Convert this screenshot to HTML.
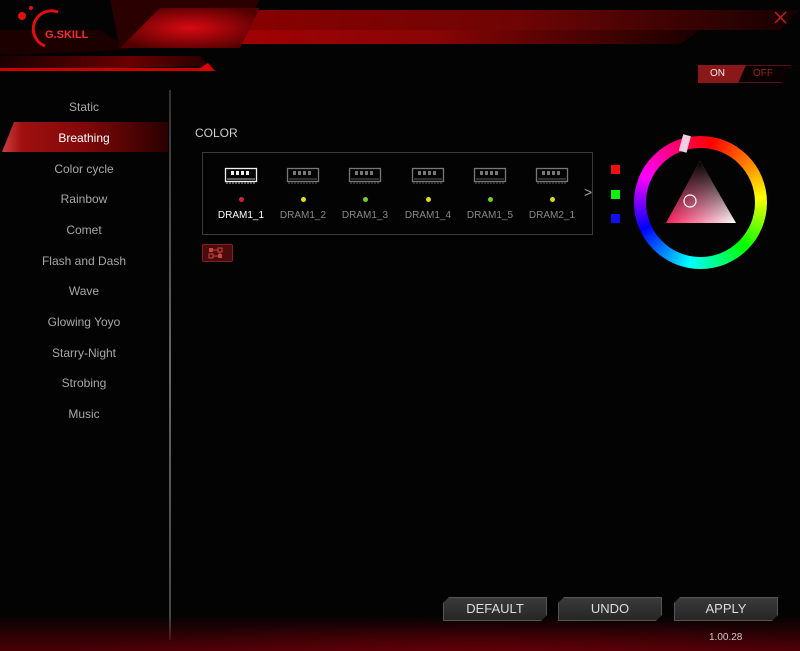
<!DOCTYPE html>
<html><head><meta charset="utf-8"><style>
*{margin:0;padding:0;box-sizing:border-box}
body{width:800px;height:651px;background:#030303;position:relative;overflow:hidden;font-family:"Liberation Sans",sans-serif}
.abs{position:absolute}
.menu div{position:absolute;left:0;width:168px;text-align:center;font-size:12px;color:#a8a8a8}
.btn{position:absolute;top:597px;width:104px;height:24px;background:linear-gradient(#3a3a3a,#262626);border:1px solid #555;color:#ddd;font-size:13px;text-align:center;line-height:22px;clip-path:polygon(6px 0,100% 0,100% calc(100% - 6px),calc(100% - 6px) 100%,0 100%,0 6px)}
.dram{position:absolute;top:167px;width:62px;text-align:center;font-size:10px;color:#8a8a8a}
.dram svg{display:block;margin:0 auto}
.dot{width:5px;height:5px;border-radius:50%;margin:12px auto 8px}
</style></head><body>
<svg width="0" height="0" style="position:absolute"><defs>
<g id="ram"><rect x="1.5" y="1.5" width="31" height="13" fill="none" stroke="currentColor" stroke-width="1.3"/>
<rect x="7" y="4" width="3" height="4" fill="currentColor"/><rect x="12" y="4" width="3" height="4" fill="currentColor"/><rect x="17" y="4" width="3" height="4" fill="currentColor"/><rect x="22" y="4" width="3" height="4" fill="currentColor"/>
<path d="M3 12H31M3 14V17M6 14V17M9 14V17M12 14V17M15 14V17M18 14V17M21 14V17M24 14V17M27 14V17M30 14V17" stroke="currentColor" stroke-width="0.8"/></g>
</defs></svg>
<!-- header -->
<svg class="abs" style="left:0;top:0" width="800" height="80">
<defs>
<linearGradient id="g1" x1="0" x2="1"><stop offset="0" stop-color="#a00"/><stop offset=".5" stop-color="#8a0505"/><stop offset="1" stop-color="#1a0000"/></linearGradient>
<linearGradient id="g2" x1="0" x2="1"><stop offset="0" stop-color="#1a0000"/><stop offset=".6" stop-color="#6a0000"/><stop offset="1" stop-color="#200"/></linearGradient>
<radialGradient id="g3" cx=".5" cy=".5" r=".6"><stop offset="0" stop-color="#d80a12"/><stop offset="1" stop-color="#500000"/></radialGradient>
</defs>
<polygon points="0,30 100,30 130,50 0,55" fill="#1c0000"/>
<polygon points="110,0 260,0 230,48 120,48" fill="#2a0000"/>
<polygon points="250,10 800,10 780,30 240,30" fill="url(#g1)" opacity=".8"/>
<polygon points="170,30 700,30 680,44 160,44" fill="url(#g1)"/>
<polygon points="160,8 260,8 240,48 120,48" fill="url(#g3)"/>
<polygon points="0,56 200,56 205,62 215,66 0,70" fill="url(#g2)"/>
<rect x="0" y="68" width="210" height="3" fill="#c00"/>
<polygon points="200,68 208,63 215,71 200,71" fill="#d00"/>
<circle cx="22" cy="16" r="4" fill="#e01010"/><circle cx="31" cy="8" r="2" fill="#e01010"/>
<path d="M45 46 A17 17 0 0 1 58 12" stroke="#e01010" stroke-width="3" fill="none"/>
<text x="45" y="38" font-family="Liberation Sans" font-weight="bold" font-size="11" fill="#f03030">G.SKILL</text>
<path d="M775 12 L786 23 M786 12 L775 23" stroke="#c02020" stroke-width="1.5"/>
</svg>
<!-- on/off -->
<div class="abs" style="left:698px;top:65px;width:93px;height:18px;border:1px solid #5a1010;background:#0a0000;clip-path:polygon(0 0,100% 0,calc(100% - 10px) 100%,0 100%)"></div>
<div class="abs" style="left:698px;top:65px;width:48px;height:18px;background:#8a1818;clip-path:polygon(0 0,100% 0,calc(100% - 8px) 100%,0 100%);color:#eee;font-size:10px;line-height:18px;padding-left:12px">ON</div>
<div class="abs" style="left:753px;top:65px;color:#9a2020;font-size:10px;line-height:18px">OFF</div>
<!-- sidebar -->
<div class="abs" style="left:169px;top:90px;width:2px;height:550px;background:linear-gradient(#333,#666,#444)"></div>
<div class="abs" style="left:2px;top:122px;width:166px;height:30px;background:linear-gradient(90deg,#d04040 0,#a01010 12%,#800808 50%,#2a0000 100%);clip-path:polygon(12px 0,100% 0,100% 100%,0 100%)"></div>
<div class="menu">
<div style="top:100px">Static</div>
<div style="top:131px;color:#fff">Breathing</div>
<div style="top:162px">Color cycle</div>
<div style="top:192px">Rainbow</div>
<div style="top:223px">Comet</div>
<div style="top:254px">Flash and Dash</div>
<div style="top:284px">Wave</div>
<div style="top:315px">Glowing Yoyo</div>
<div style="top:346px">Starry-Night</div>
<div style="top:376px">Strobing</div>
<div style="top:407px">Music</div>
</div>
<div class="abs" style="left:195px;top:126px;color:#ccc;font-size:12px">COLOR</div>
<div class="abs" style="left:202px;top:152px;width:391px;height:83px;border:1px solid #3a3a3a"></div>
<div class="dram" style="left:210px;color:#fff"><svg width="34" height="18" style="color:#eee"><use href="#ram"/></svg><div class="dot" style="background:#d0203a"></div>DRAM1_1</div>
<div class="dram" style="left:272px"><svg width="34" height="18" style="color:#777"><use href="#ram"/></svg><div class="dot" style="background:#e0e020"></div>DRAM1_2</div>
<div class="dram" style="left:334px"><svg width="34" height="18" style="color:#777"><use href="#ram"/></svg><div class="dot" style="background:#70d020"></div>DRAM1_3</div>
<div class="dram" style="left:397px"><svg width="34" height="18" style="color:#777"><use href="#ram"/></svg><div class="dot" style="background:#e0e020"></div>DRAM1_4</div>
<div class="dram" style="left:459px"><svg width="34" height="18" style="color:#777"><use href="#ram"/></svg><div class="dot" style="background:#70d020"></div>DRAM1_5</div>
<div class="dram" style="left:521px"><svg width="34" height="18" style="color:#777"><use href="#ram"/></svg><div class="dot" style="background:#d0e020"></div>DRAM2_1</div>
<div class="abs" style="left:584px;top:184px;color:#aaa;font-size:14px">&gt;</div>
<div class="abs" style="left:202px;top:244px;width:31px;height:18px;background:#4a0c0c;border-radius:2px;border:1px solid #802020"></div>
<svg class="abs" style="left:208px;top:247px" width="18" height="12"><rect x="1" y="1" width="4" height="4" fill="#c44"/><rect x="10" y="1" width="4" height="4" fill="none" stroke="#c44"/><rect x="1" y="7" width="4" height="4" fill="none" stroke="#c44"/><rect x="10" y="7" width="4" height="4" fill="#c44"/><path d="M5 3H10M5 9H10M12 5V7" stroke="#c44"/></svg>
<div class="abs" style="left:611px;top:165px;width:9px;height:9px;background:#f01010"></div>
<div class="abs" style="left:611px;top:190px;width:9px;height:9px;background:#10f010"></div>
<div class="abs" style="left:611px;top:214px;width:9px;height:9px;background:#1010f0"></div>
<div class="abs" style="left:634px;top:136px;width:133px;height:133px;border-radius:50%;background:conic-gradient(from 10deg,red,#ff8000 40deg,yellow 75deg,lime 125deg,cyan 180deg,blue 235deg,magenta 285deg,#ff0060 330deg,red)"></div>
<div class="abs" style="left:646px;top:148px;width:109px;height:109px;border-radius:50%;background:#030303"></div>
<svg class="abs" style="left:600px;top:130px" width="180" height="145">
<defs>
<linearGradient id="t1" x1="0" y1="1" x2="1" y2="1"><stop offset="0" stop-color="#ff2060"/><stop offset="1" stop-color="#fff"/></linearGradient>
<linearGradient id="t2" x1="0" y1="0" x2="0" y2="1"><stop offset="0" stop-color="#000"/><stop offset="1" stop-color="#000" stop-opacity="0"/></linearGradient>
</defs>
<polygon points="100,31 66,93 136,93" fill="url(#t1)"/>
<polygon points="100,31 66,93 136,93" fill="url(#t2)"/>
<circle cx="90" cy="71" r="6" fill="none" stroke="#fff" stroke-width="1.2"/>
<rect x="81" y="5" width="8" height="17" fill="#f0d0e0" transform="rotate(15 85 13)"/>
</svg>
<!-- bottom -->
<div class="abs" style="left:0;top:615px;width:800px;height:36px;background:linear-gradient(rgba(0,0,0,0),#4a0006)"></div>
<div class="abs" style="left:0;top:615px;width:800px;height:36px;background:radial-gradient(ellipse at 60% 100%,rgba(140,0,10,.35),transparent 60%)"></div>
<div class="btn" style="left:443px">DEFAULT</div>
<div class="btn" style="left:558px">UNDO</div>
<div class="btn" style="left:674px">APPLY</div>
<div class="abs" style="left:709px;top:632px;color:#ccc;font-size:10px">1.00.28</div>
</body></html>
